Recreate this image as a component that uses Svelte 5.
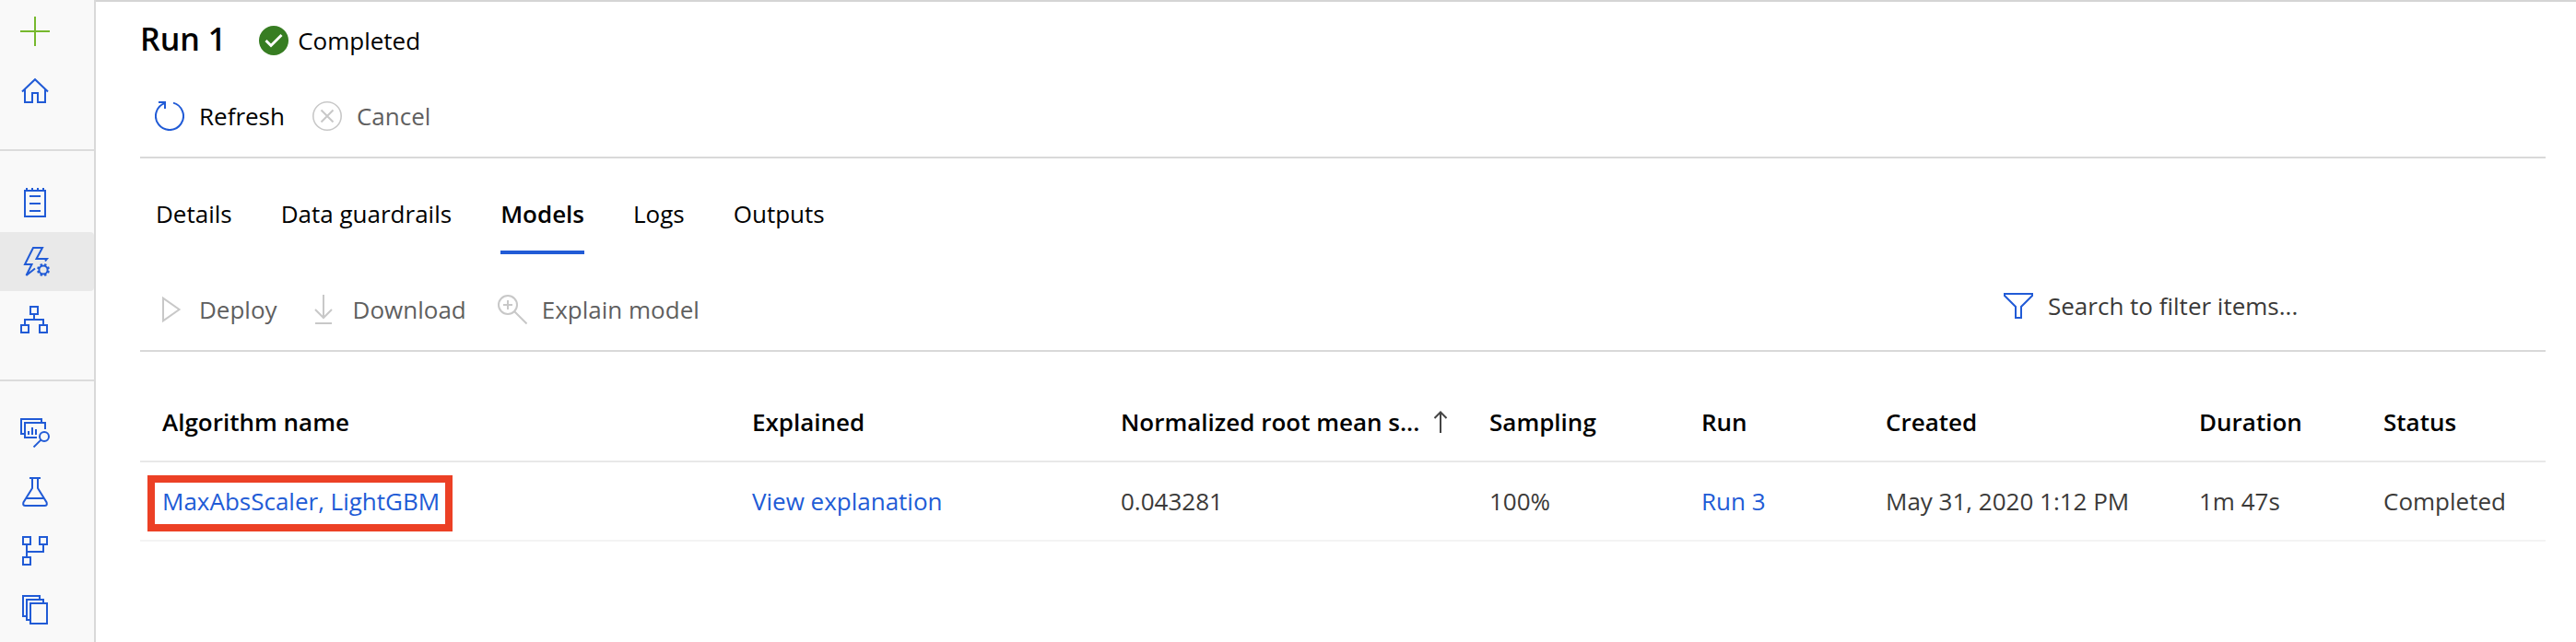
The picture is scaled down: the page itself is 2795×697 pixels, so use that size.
<script>
  const navGroups = [
    [
      { id: 'new', label: 'New' },
      { id: 'home', label: 'Home' }
    ],
    [
      { id: 'notebooks', label: 'Notebooks' },
      { id: 'automl', label: 'Automated ML', current: true },
      { id: 'designer', label: 'Designer' }
    ],
    [
      { id: 'datasets', label: 'Datasets' },
      { id: 'experiments', label: 'Experiments' },
      { id: 'pipelines', label: 'Pipelines' },
      { id: 'models', label: 'Models' }
    ]
  ];

  const tabs = ['Details', 'Data guardrails', 'Models', 'Logs', 'Outputs'];
  let activeTab = $state('Models');
  let filter = $state('');

  const rows = [
    {
      algorithm: 'MaxAbsScaler, LightGBM',
      explained: 'View explanation',
      score: '0.043281',
      sampling: '100%',
      run: 'Run 3',
      created: 'May 31, 2020 1:12 PM',
      duration: '1m 47s',
      status: 'Completed',
      highlighted: true
    }
  ];

  const gearTeeth = [0, 45, 90, 135, 180, 225, 270, 315];
</script>

{#snippet navIcon(id)}
  <svg class="icon" class:green={id === 'new'} viewBox="0 0 32 32" aria-hidden="true">
    {#if id === 'new'}
      <path d="M16 0V32M0 16H32" />
    {:else if id === 'home'}
      <path d="M2 17.5L16 4.2L30 17.5M5 15V29H13V19H19V29H27V15" />
    {:else if id === 'notebooks'}
      <path d="M5 3H27V31H5ZM7 0V3M13 0V3M19 0V3M25 0V3M10 9H22M10 17H22M10 25H22" />
    {:else if id === 'automl'}
      <path d="M27 15.5L29 13H17.5L24 1H14L5 19H12.5L6.5 31L16 23.5" />
      <circle cx="25" cy="25" r="4.6" />
      {#each gearTeeth as angle}
        <path d="M25 20.5V18" stroke-width="2.4" transform={`rotate(${angle + 22.5} 25 25)`} />
      {/each}
    {:else if id === 'designer'}
      <path d="M11 1H19V9H11ZM1 21H9V29H1ZM21 21H29V29H21ZM15 9V15M5 21V15H25V21" />
    {:else if id === 'datasets'}
      <path d="M4 17H1V1H23V5M18 21H5V5H27V12M9 14V18M13 10V18M17 12V18" />
      <circle cx="26" cy="20" r="5" />
      <path d="M22.4 23.6L14.5 31.4" />
    {:else if id === 'experiments'}
      <path d="M10 1H22M13 1V12L3.4 27.5Q2.4 31 5.5 31H26.5Q29.6 31 28.6 27.5L19 12V1M6.5 23H25.5" />
    {:else if id === 'pipelines'}
      <path d="M3 1H11V9H3ZM21 1H29V9H21ZM3 23H11V31H3ZM7 9V23M25 9V17H7" />
    {:else}
      <path d="M6 23H3V1H21V5M10 27H7V5H25V9M11 9H29V31H11Z" />
    {/if}
  </svg>
{/snippet}

<div class="shell">
  <nav class="sidebar" aria-label="Workspace">
    {#each navGroups as group}
      <div class="nav-group">
        {#each group as item}
          <a
            class="nav-item"
            class:current={item.current}
            href={'#' + item.id}
            aria-label={item.label}
            aria-current={item.current ? 'page' : undefined}
          >
            {@render navIcon(item.id)}
          </a>
        {/each}
      </div>
    {/each}
  </nav>

  <main>
    <header class="title-row">
      <h1>Run 1</h1>
      <div class="run-status">
        <svg viewBox="0 0 32 32" aria-hidden="true">
          <circle cx="16" cy="16" r="16" fill="#377d22" />
          <path d="M7.5 16L13 21.5L24.5 10" fill="none" stroke="#fff" stroke-width="3" />
        </svg>
        <span>Completed</span>
      </div>
    </header>

    <div class="toolbar">
      <div class="actions">
        <button class="command" type="button">
          <svg class="icon" viewBox="0 0 32 32" aria-hidden="true">
            <path d="M20 1.6A15 15 0 1 1 11 1.9M4 1H11V8" />
          </svg>
          Refresh
        </button>
        <button class="command" type="button" disabled>
          <svg class="icon" viewBox="0 0 32 32" aria-hidden="true">
            <circle cx="16" cy="16" r="15.2" stroke-width="1.6" />
            <path d="M9.5 9.5L22.5 22.5M22.5 9.5L9.5 22.5" />
          </svg>
          Cancel
        </button>
      </div>
    </div>

    <div class="tabs" role="tablist">
      {#each tabs as tab}
        <button
          class="tab"
          class:active={tab === activeTab}
          type="button"
          role="tab"
          aria-selected={tab === activeTab}
          onclick={() => (activeTab = tab)}>{tab}</button
        >
      {/each}
    </div>

    <div class="toolbar">
      <div class="actions model-actions">
        <button class="command" type="button" disabled>
          <svg class="icon" viewBox="0 0 32 32" aria-hidden="true">
            <path d="M9 3.6V28.4L26.5 16Z" />
          </svg>
          Deploy
        </button>
        <button class="command" type="button" disabled>
          <svg class="icon" viewBox="0 0 32 32" aria-hidden="true">
            <path d="M16 0V25M7 16L16 25L25 16M7 31H25" />
          </svg>
          Download
        </button>
        <button class="command" type="button" disabled>
          <svg class="icon" viewBox="0 0 32 32" aria-hidden="true">
            <circle cx="11" cy="11" r="10" />
            <path d="M18 18L31.5 31.5M11 6V16M6 11H16" />
          </svg>
          Explain model
        </button>
      </div>
      <label class="search">
        <svg class="icon" viewBox="0 0 32 32" aria-hidden="true">
          <path d="M1 3H31V5L19 17V29H13V17L1 5Z" />
        </svg>
        <input type="text" placeholder="Search to filter items..." aria-label="Search to filter items" bind:value={filter} />
      </label>
    </div>

    <table>
      <colgroup>
        <col />
        <col class="c-wide" />
        <col class="c-wide" />
        <col class="c-sampling" />
        <col class="c-small" />
        <col class="c-created" />
        <col class="c-small" />
        <col class="c-small" />
      </colgroup>
      <thead>
        <tr>
          <th>Algorithm name</th>
          <th>Explained</th>
          <th aria-sort="ascending">
            <span class="sorted">
              Normalized root mean s...
              <svg viewBox="0 0 16 24" aria-hidden="true"><path d="M8 24V1.5M1.5 8L8 1.5L14.5 8" /></svg>
            </span>
          </th>
          <th>Sampling</th>
          <th>Run</th>
          <th>Created</th>
          <th>Duration</th>
          <th>Status</th>
        </tr>
      </thead>
      <tbody>
        {#each rows as row}
          <tr>
            <td><a class:highlighted={row.highlighted} href="#model">{row.algorithm}</a></td>
            <td><a href="#explanation">{row.explained}</a></td>
            <td>{row.score}</td>
            <td>{row.sampling}</td>
            <td><a href="#run">{row.run}</a></td>
            <td>{row.created}</td>
            <td>{row.duration}</td>
            <td>{row.status}</td>
          </tr>
        {/each}
      </tbody>
    </table>
  </main>
</div>

<style>
  :global(body) {
    margin: 0;
    background: #fff;
  }

  .shell {
    display: flex;
    min-height: 100vh;
    font-family: 'Segoe UI', 'Open Sans', 'Noto Sans', sans-serif;
    font-size: 26px;
    line-height: 40px;
    color: #000;
  }

  .sidebar {
    flex: none;
    box-sizing: border-box;
    width: 104px;
    padding-top: 2px;
    border-right: 2px solid #d9d9d9;
    background: #f9f9f9;
  }

  .nav-group + .nav-group {
    margin-top: 32px;
    padding-top: 24px;
    border-top: 2px solid #dcdcdc;
  }

  .nav-item {
    display: flex;
    align-items: center;
    height: 64px;
    padding-left: 22px;
  }

  .nav-item.current {
    border-radius: 0 4px 4px 0;
    background: #e9e9e9;
  }

  .icon {
    flex: none;
    width: 32px;
    height: 32px;
    fill: none;
    stroke: #215bd6;
    stroke-width: 2;
  }

  .icon.green {
    stroke: #76b82d;
  }

  main {
    flex: 1;
    min-width: 0;
    padding: 0 33px 0 48px;
    border-top: 2px solid #d5d5d5;
  }

  .title-row {
    display: flex;
    align-items: center;
    height: 80px;
    gap: 36px;
  }

  h1 {
    margin: 0;
    font-size: 34px;
    font-weight: 600;
  }

  .run-status {
    display: flex;
    align-items: center;
    gap: 10px;
    padding-top: 4px;
  }

  .run-status svg {
    width: 32px;
    height: 32px;
  }

  .toolbar {
    display: flex;
    align-items: center;
    justify-content: space-between;
    height: 88px;
    border-bottom: 2px solid #d9d9d9;
  }

  .actions {
    display: flex;
    gap: 30px;
    padding-left: 16px;
  }

  .model-actions {
    gap: 34px;
  }

  button,
  input {
    margin: 0;
    padding: 0;
    border: 0;
    background: none;
    font: inherit;
    color: inherit;
  }

  .command {
    display: flex;
    align-items: center;
    gap: 16px;
  }

  .command:disabled {
    color: #5f5f5f;
  }

  .command:disabled .icon {
    stroke: #c8c8c8;
  }

  .tabs {
    display: flex;
    gap: 53px;
    margin: 16px 0;
    padding-left: 17px;
  }

  .tab {
    height: 88px;
  }

  .tab.active {
    font-weight: 600;
    box-shadow: inset 0 -4px #215bd6;
  }

  .search {
    display: flex;
    align-items: center;
    gap: 16px;
    width: 588px;
    padding-bottom: 8px;
  }

  .search input {
    flex: 1;
    min-width: 0;
    height: 40px;
    outline: none;
    color: #333;
  }

  .search input::placeholder {
    color: #3b3a39;
    opacity: 1;
  }

  table {
    width: 100%;
    margin-top: 30px;
    border-collapse: separate;
    border-spacing: 0;
    table-layout: fixed;
  }

  .c-wide {
    width: 400px;
  }

  .c-sampling {
    width: 230px;
  }

  .c-small {
    width: 200px;
  }

  .c-created {
    width: 340px;
  }

  th,
  td {
    height: 84px;
    padding: 0 0 0 24px;
    text-align: left;
    white-space: nowrap;
  }

  th {
    padding-top: 4px;
    border-bottom: 2px solid #e8e8e8;
    font-weight: 600;
  }

  td {
    border-bottom: 2px solid #f3f3f3;
    color: #3b3a39;
  }

  .sorted {
    display: flex;
    align-items: center;
    justify-content: space-between;
    padding-right: 21px;
  }

  .sorted svg {
    flex: none;
    width: 16px;
    height: 24px;
    fill: none;
    stroke: #444;
    stroke-width: 2;
  }

  td a {
    color: #215bd6;
    text-decoration: none;
  }

  .highlighted {
    display: inline-block;
    position: relative;
  }

  .highlighted::after {
    content: '';
    position: absolute;
    inset: -8px -14px -13px -16px;
    border: 8px solid #ec4025;
  }
</style>
